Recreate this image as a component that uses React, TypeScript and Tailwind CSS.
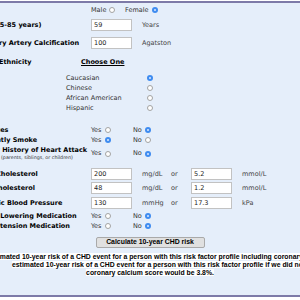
import React from "react"

const sans = "font-['DejaVu_Sans',Verdana,sans-serif]"
const arial = "font-['Liberation_Sans',Arial,sans-serif]"

function Radio({ on = false }: { on?: boolean }) {
  if (on) {
    return (
      <span className="inline-flex h-[6px] w-[6px] items-center justify-center rounded-full bg-[#3f8cf0]">
        <span className="h-[2px] w-[2px] rounded-full bg-[#dbe9ff]" />
      </span>
    )
  }
  return <span className="inline-block h-[6px] w-[6px] rounded-full border border-[#a3a3a3] bg-white" />
}

function Choice({ text, on }: { text: string; on?: boolean }) {
  return (
    <span className="inline-flex items-center gap-[3px] text-[#333]">
      {text}
      <Radio on={on} />
    </span>
  )
}

function Field({ value }: { value: string }) {
  return (
    <input
      readOnly
      value={value}
      className="h-[12px] w-[41px] border border-[#c2c2c2] bg-white px-[2px] text-[6.5px] text-[#222] outline-none"
    />
  )
}

function YesNo({
  label,
  yes,
  sub,
  tall,
  shift = "",
}: {
  label: string
  yes: boolean
  sub?: string
  tall?: boolean
  shift?: string
}) {
  return (
    <div className={`flex items-center ${tall ? "h-[17px]" : "h-[10px]"}`}>
      <div className="w-[115px] shrink-0">
        <div className={`whitespace-nowrap font-bold leading-[8px] text-black ${shift}`}>{label}</div>
        {sub && <div className="whitespace-nowrap pl-[25px] text-[4.8px] leading-[7px] text-[#333]">{sub}</div>}
      </div>
      <div className="w-[42px]">
        <Choice text="Yes" on={yes} />
      </div>
      <Choice text="No" on={!yes} />
    </div>
  )
}

function LabRow({ label, a, u1, b, u2, cls }: { label: string; a: string; u1: string; b: string; u2: string; cls: string }) {
  return (
    <div className={`flex h-[14px] items-center ${cls}`}>
      <div className="w-[115px] shrink-0 whitespace-nowrap font-bold text-black">{label}</div>
      <div className="w-[51px] shrink-0">
        <Field value={a} />
      </div>
      <div className="w-[29px] shrink-0 text-[#444]">{u1}</div>
      <div className="w-[20px] shrink-0 text-[#444]">or</div>
      <div className="w-[51px] shrink-0">
        <Field value={b} />
      </div>
      <div className="text-[#444]">{u2}</div>
    </div>
  )
}

const ethnicities = [
  { name: "Caucasian", on: true },
  { name: "Chinese", on: false },
  { name: "African American", on: false },
  { name: "Hispanic", on: false },
]

export default function App() {
  return (
    <div className="h-[300px] w-[300px] overflow-hidden bg-white">
      <div className="mt-[1px] h-[296px] border-y-2 border-[#7d7aa8] bg-[#e5eefa]">
        <div className={`-ml-[24px] w-[348px] text-[6.5px] leading-none ${sans}`}>
          {/* Sex */}
          <div className="flex h-[14px] items-center">
            <div className="w-[115px] shrink-0 font-bold">Sex</div>
            <div className="w-[34px]">
              <Choice text="Male" />
            </div>
            <Choice text="Female" on />
          </div>

          {/* Age */}
          <div className="mt-[1px] flex h-[14px] items-center">
            <div className="w-[115px] shrink-0 whitespace-nowrap font-bold">Age (45-85 years)</div>
            <div className="w-[51px] shrink-0">
              <Field value="59" />
            </div>
            <div className="text-[#444]">Years</div>
          </div>

          {/* CAC */}
          <div className="mt-[4px] flex h-[14px] items-center">
            <div className="w-[115px] shrink-0 whitespace-nowrap font-bold">
              <span className="-ml-[3px]">Coronary Artery Calcification</span>
            </div>
            <div className="w-[51px] shrink-0">
              <Field value="100" />
            </div>
            <div className="text-[#444]">Agatston</div>
          </div>

          {/* Ethnicity */}
          <div className="mt-[6px] flex h-[12px] items-center">
            <div className="w-[105px] shrink-0 pl-[3px] font-bold">Race/Ethnicity</div>
            <div className="font-bold underline">Choose One</div>
          </div>
          <div className="mt-[5px]">
            {ethnicities.map((e) => (
              <div key={e.name} className="flex h-[10px] items-center pl-[90px]">
                <div className="w-[81px] shrink-0 text-[#333]">{e.name}</div>
                <Radio on={e.on} />
              </div>
            ))}
          </div>

          {/* Yes / No questions */}
          <div className="mt-[12px]">
            <YesNo label="Diabetes" yes={false} />
            <YesNo label="Currently Smoke" yes />
            <YesNo label="Family History of Heart Attack" sub="(parents, siblings, or children)" yes={false} tall />
          </div>

          {/* Lab values */}
          <LabRow cls="mt-[5px]" label="Total Cholesterol" a="200" u1="mg/dL" b="5.2" u2="mmol/L" />
          <LabRow cls="" label="HDL Cholesterol" a="48" u1="mg/dL" b="1.2" u2="mmol/L" />
          <LabRow cls="mt-[1px]" label="Systolic Blood Pressure" a="130" u1="mmHg" b="17.3" u2="kPa" />

          <div className="mt-[1px]">
            <YesNo label="Lipid Lowering Medication" yes={false} shift="ml-[4px]" />
            <YesNo label="Hypertension Medication" yes={false} shift="ml-[2px]" />
          </div>

          {/* Button */}
          <div className="mt-[6px] flex justify-center">
            <button
              className={`h-[11px] w-[109px] rounded-[2px] border border-[#a9a9a9] bg-[#e0e0e0] text-[6.9px] font-bold leading-none text-black ${arial}`}
            >
              Calculate 10-year CHD risk
            </button>
          </div>

          {/* Result */}
          <div className={`mt-[5px] text-[6.85px] font-bold leading-[8px] text-black ${arial}`}>
            <div className="-ml-[2px] whitespace-nowrap">
              <span className="bg-white">
                The estimated 10-year risk of a CHD event for a person with this risk factor profile including coronary calcium is 2.6%. The
              </span>
            </div>
            <div className="whitespace-nowrap pl-[36px]">
              <span className="bg-white">
                estimated 10-year risk of a CHD event for a person with this risk factor profile if we did not factor in the
              </span>
            </div>
            <div className="whitespace-nowrap text-center">
              <span className="bg-white">coronary calcium score would be 3.8%.</span>
            </div>
          </div>
        </div>
      </div>
    </div>
  )
}
